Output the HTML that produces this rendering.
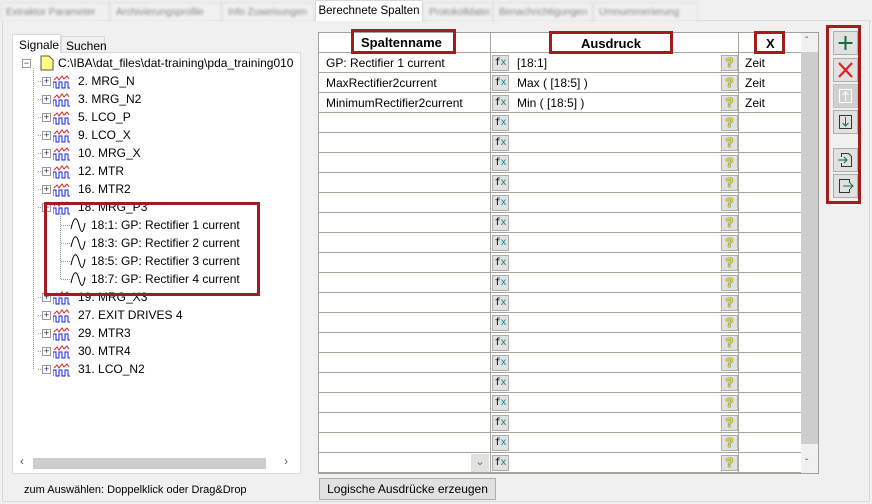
<!DOCTYPE html>
<html><head><meta charset="utf-8">
<style>
*{box-sizing:border-box;margin:0;padding:0}
body{width:872px;height:504px;background:#f0f0f0;font-family:"Liberation Sans",sans-serif;font-size:12px;color:#000;position:relative;overflow:hidden}
.abs{position:absolute}
.tab{position:absolute;top:2px;height:19px;border:1px solid #d9d9d9;border-bottom:none;background:#f0f0f0;color:#888;font-size:10px;padding:4px 5px;filter:blur(1.3px);white-space:nowrap;overflow:hidden}
.atab{position:absolute;top:0;left:315px;width:108px;height:21px;background:#fff;border:1px solid #d9d9d9;border-bottom:none;padding:4px 0;text-align:center;font-size:11.5px;white-space:nowrap;z-index:2}
.panel{position:absolute;left:2px;top:20px;width:868px;height:482px;border:1px solid #d9d9d9;background:#f0f0f0}
.tree{position:absolute;left:12px;top:52px;width:289px;height:422px;background:#fff;border:1px solid #d9d9d9}
.ti{position:absolute;height:18px;line-height:18px;white-space:nowrap;font-size:12px}
.pm{position:absolute;width:9px;height:9px;border:1px solid #999;background:#fff;font-size:9px;line-height:7px;text-align:center;color:#225}
.tbl{position:absolute;left:318px;top:32px;width:501px;height:442px;border:1px solid #a0a0a0;background:#fff}
.row{position:absolute;left:0;width:482px;height:20px;border-bottom:1px solid #a9a59a}
.c1{position:absolute;left:0;width:172px;height:20px;border-right:1px solid #a9a59a;padding:3px 7px;font-size:12px;white-space:nowrap}
.fx{position:absolute;left:173px;top:2px;width:17px;height:16px;background:#e1e1e1;border:1px solid #adadad;font-size:10px;line-height:14px;text-align:center;font-family:"DejaVu Sans Mono",monospace}
.fx i{color:#0a8a80;font-style:normal}
.ex{position:absolute;left:198px;top:3px;font-size:12px}
.q{position:absolute;left:402px;top:2px;width:17px;height:16px;background:#e1e1e1;border:1px solid #adadad;color:#ecec00;font-weight:bold;font-size:13px;line-height:14px;text-align:center;text-shadow:0 0 1px #333,0 0 1px #333}
.c3{position:absolute;left:419px;width:1px;height:20px;background:#a9a59a}
.x{position:absolute;left:426px;top:3px}
.red{position:absolute;border:3px solid #a31a1f}
.btn{position:absolute;left:833px;width:25px;height:24px;background:#e1e1e1;border:1px solid #adadad}
</style></head><body>
<div class="panel"></div>
<div class="tab" style="left:0;width:110px">Extraktor Parameter</div>
<div class="tab" style="left:110px;width:112px">Archivierungsprofile</div>
<div class="tab" style="left:222px;width:93px">Info Zuweisungen</div>
<div class="atab">Berechnete Spalten</div>
<div class="tab" style="left:423px;width:70px">Protokolldatei</div>
<div class="tab" style="left:493px;width:100px">Benachrichtigungen</div>
<div class="tab" style="left:593px;width:105px">Umnummerierung</div>

<div class="abs" style="left:12px;top:34px;width:49px;height:19px;background:#fff;border:1px solid #d9d9d9;border-bottom:none;padding:3px 6px;z-index:2">Signale</div>
<div class="abs" style="left:61px;top:36px;width:44px;height:17px;border:1px solid #d9d9d9;border-bottom:none;padding:2px 4px">Suchen</div>
<div class="tree">
<svg class="abs" style="left:0;top:0" width="289" height="400">
<g stroke="#999" stroke-dasharray="1,1" fill="none">
<line x1="20.5" y1="15" x2="20.5" y2="316"/>
<line x1="33" y1="10.5" x2="38" y2="10.5"/>
<line x1="47.5" y1="161" x2="47.5" y2="226"/>
</g>
<g stroke="#999" stroke-dasharray="1,1">
<line x1="25" y1="28.5" x2="30" y2="28.5"/><line x1="25" y1="46.5" x2="30" y2="46.5"/><line x1="25" y1="64.5" x2="30" y2="64.5"/><line x1="25" y1="82.5" x2="30" y2="82.5"/><line x1="25" y1="100.5" x2="30" y2="100.5"/><line x1="25" y1="118.5" x2="30" y2="118.5"/><line x1="25" y1="136.5" x2="30" y2="136.5"/><line x1="25" y1="154.5" x2="30" y2="154.5"/><line x1="25" y1="244.5" x2="30" y2="244.5"/><line x1="25" y1="262.5" x2="30" y2="262.5"/><line x1="25" y1="280.5" x2="30" y2="280.5"/><line x1="25" y1="298.5" x2="30" y2="298.5"/><line x1="25" y1="316.5" x2="30" y2="316.5"/>
<line x1="48" y1="172.5" x2="58" y2="172.5"/><line x1="48" y1="190.5" x2="58" y2="190.5"/><line x1="48" y1="208.5" x2="58" y2="208.5"/><line x1="48" y1="226.5" x2="58" y2="226.5"/>
</g>
<g fill="none" stroke="#000" stroke-width="1">
<path d="M58 176 C61 162,64 164,66 172 S70 182,72 170"/>
<path d="M58 194 C61 180,64 182,66 190 S70 200,72 188"/>
<path d="M58 212 C61 198,64 200,66 208 S70 218,72 206"/>
<path d="M58 230 C61 216,64 218,66 226 S70 236,72 224"/>
</g>
<path d="M28 3 h8 l4 4 v10 h-12z" fill="#ffff80" stroke="#555"/>
</svg>
<div class="pm" style="left:9px;top:6px">−</div>
<div class="ti" style="left:45px;top:1px">C:\IBA\dat_files\dat-training\pda_training010</div>
<div id="sigs"></div>
<div class="ti" style="left:78px;top:163px">18:1: GP: Rectifier 1 current</div>
<div class="ti" style="left:78px;top:181px">18:3: GP: Rectifier 2 current</div>
<div class="ti" style="left:78px;top:199px">18:5: GP: Rectifier 3 current</div>
<div class="ti" style="left:78px;top:217px">18:7: GP: Rectifier 4 current</div>
<div class="abs" style="left:7px;top:401px;color:#555;font-size:12px">&#8249;</div>
<div class="abs" style="left:20px;top:405px;width:233px;height:11px;background:#cdcdcd"></div>
<div class="abs" style="left:271px;top:401px;color:#555;font-size:12px">&#8250;</div>
</div>
<div class="red" style="left:44px;top:202px;width:216px;height:94px"></div>
<div class="abs" style="left:24px;top:484px;font-size:11px">zum Auswählen: Doppelklick oder Drag&amp;Drop</div>

<div class="tbl" id="tbl">
<div class="row" style="top:0;height:20px"><div class="c1">&nbsp;</div><div class="c3" style="left:419px"></div>
<div class="abs" style="left:262px;top:3px;font-weight:bold;font-size:13px">Ausdruck</div>
<div class="abs" style="left:447px;top:3px;font-weight:bold;font-size:13px">X</div></div>
</div>
<div class="abs" style="left:801px;top:33px;width:17px;height:440px;background:#f0f0f0"></div>
<div class="abs" style="left:801px;top:52px;width:17px;height:392px;background:#cdcdcd"></div>
<div class="abs" style="left:805px;top:36px;font-size:10px;color:#555">&#710;</div>
<div class="abs" style="left:805px;top:458px;font-size:10px;color:#555">&#711;</div>
<div class="abs" style="left:361px;top:35px;font-weight:bold;font-size:13px">Spaltenname</div>
<div class="red" style="left:351px;top:29px;width:105px;height:25px"></div>
<div class="red" style="left:549px;top:31px;width:124px;height:23px"></div>
<div class="red" style="left:754px;top:31px;width:31px;height:23px"></div>

<div class="abs" style="left:319px;top:478px;width:177px;height:22px;background:#e1e1e1;border:1px solid #adadad;text-align:center;line-height:20px">Logische Ausdrücke erzeugen</div>

<div class="red" style="left:826px;top:25px;width:35px;height:179px"></div>
<div class="btn" style="top:31px"><svg width="23" height="22"><path d="M11.5 4v14M4.5 11h14" stroke="#107040" stroke-width="2"/></svg></div>
<div class="btn" style="top:58px"><svg width="23" height="22"><path d="M5 4l13 14M18 4L5 18" stroke="#e02020" stroke-width="2.2"/></svg></div>
<div class="btn" style="top:84px;background:#d0d0d0;border-color:#c0c0c0"><svg width="23" height="22"><rect x="5.5" y="4.5" width="12" height="13" fill="none" stroke="#fff"/><path d="M11.5 16V7M8.5 10l3-3 3 3" stroke="#fff" fill="none"/></svg></div>
<div class="btn" style="top:110px"><svg width="23" height="22"><rect x="5.5" y="4.5" width="12" height="13" fill="none" stroke="#333"/><path d="M11.5 6v9M8.5 12l3 3 3-3" stroke="#107040" fill="none"/></svg></div>
<div class="btn" style="top:148px"><svg width="23" height="22"><path d="M7.5 8V4.5h7l3 3v10h-10V14" fill="none" stroke="#333"/><path d="M4 11h9M10 8l3 3-3 3" stroke="#107040" fill="none"/></svg></div>
<div class="btn" style="top:174px"><svg width="23" height="22"><path d="M15.5 8V4.5h-10v13h10V14" fill="none" stroke="#333"/><path d="M9 11h10M16 8l3 3-3 3" stroke="#107040" fill="none"/></svg></div>

<script>
var names=["2. MRG_N","3. MRG_N2","5. LCO_P","9. LCO_X","10. MRG_X","12. MTR","16. MTR2","18. MRG_P3",null,null,null,null,"19. MRG_X3","27. EXIT DRIVES 4","29. MTR3","30. MTR4","31. LCO_N2"];
var h="";
names.forEach(function(n,i){if(!n)return;var y=19+i*18;
h+='<div class="pm" style="left:29px;top:'+(y+5)+'px">'+(i==7?'−':'+')+'</div>';
h+='<svg class="abs" style="left:40px;top:'+(y+1)+'px" width="18" height="16"><path d="M1 7l3-3 2 3 3-4 2 3 3-3 2 3" stroke="#e02020" fill="none"/><path d="M0 15V9h3v6h3V9h3v6h3V9h3v6h2" stroke="#1020e0" fill="none"/></svg>';
h+='<div class="ti" style="left:65px;top:'+y+'px">'+n+'</div>';});
document.getElementById('sigs').innerHTML=h;
var data=[["GP: Rectifier 1 current","[18:1]","Zeit"],["MaxRectifier2current","Max ( [18:5] )","Zeit"],["MinimumRectifier2current","Min ( [18:5] )","Zeit"]];
var t="";
for(var r=0;r<21;r++){var d=data[r]||["","",""];
t+='<div class="row" style="top:'+(20+r*20)+'px"><div class="c1">'+d[0]+'</div><div class="fx">f<i>x</i></div><div class="ex">'+d[1]+'</div><div class="q">?</div><div class="c3"></div><div class="x">'+d[2]+'</div>'+(r==20?'<div class="abs" style="left:152px;top:1px;width:18px;height:18px;background:#e1e1e1;color:#666;text-align:center;font-size:11px;line-height:17px">&#8964;</div>':'')+'</div>';}
document.getElementById('tbl').insertAdjacentHTML('beforeend',t);
</script>
</body></html>
